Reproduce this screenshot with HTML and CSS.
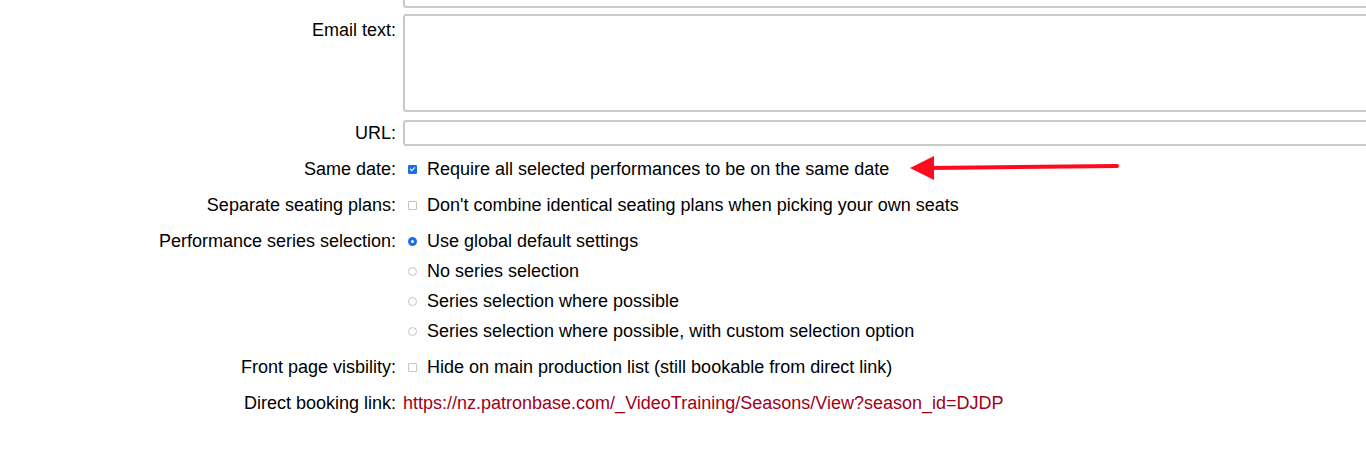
FILE: index.html
```html
<!DOCTYPE html>
<html>
<head>
<meta charset="utf-8">
<link rel="stylesheet" href="styles.css">
</head>
<body>
<div class="form">
  <div class="row row-top">
    <div class="label"></div>
    <div class="value"><input class="text-input" type="text"></div>
  </div>
  <div class="row row-email">
    <div class="label">Email text:</div>
    <div class="value"><textarea class="textarea"></textarea></div>
  </div>
  <div class="row row-url">
    <div class="label">URL:</div>
    <div class="value"><input class="text-input" type="text"></div>
  </div>
  <div class="row row-opt row-same">
    <div class="label">Same date:</div>
    <div class="value">
      <label class="opt"><span class="box checked"></span>Require all selected performances to be on the same date</label>
    </div>
    <svg class="arrow" width="220" height="30" viewBox="0 0 220 30">
      <polygon points="0,15 24,3 24,27" fill="#ff0a1e"/>
      <line x1="20" y1="15" x2="207" y2="13" stroke="#ff0a1e" stroke-width="4" stroke-linecap="round"/>
    </svg>
  </div>
  <div class="row row-opt">
    <div class="label">Separate seating plans:</div>
    <div class="value">
      <label class="opt"><span class="box"></span>Don't combine identical seating plans when picking your own seats</label>
    </div>
  </div>
  <div class="row row-opt">
    <div class="label">Performance series selection:</div>
    <div class="value">
      <label class="opt"><span class="radio checked"></span>Use global default settings</label>
      <label class="opt"><span class="radio"></span>No series selection</label>
      <label class="opt"><span class="radio"></span>Series selection where possible</label>
      <label class="opt"><span class="radio"></span>Series selection where possible, with custom selection option</label>
    </div>
  </div>
  <div class="row row-opt">
    <div class="label">Front page visbility:</div>
    <div class="value">
      <label class="opt"><span class="box"></span>Hide on main production list (still bookable from direct link)</label>
    </div>
  </div>
  <div class="row row-opt">
    <div class="label">Direct booking link:</div>
    <div class="value">
      <a class="link" href="#">https://nz.patronbase.com/_VideoTraining/Seasons/View?season_id=DJDP</a>
    </div>
  </div>
</div>
</body>
</html>
```

FILE: styles.css
```css
html, body {
  margin: 0;
  padding: 0;
  background: #ffffff;
  overflow: hidden;
}
body {
  font-family: "Liberation Sans", Arial, sans-serif;
  font-size: 18px;
  color: #000000;
  width: 1366px;
  height: 464px;
}
.form {
  display: flex;
  flex-direction: column;
}
.row {
  display: grid;
  grid-template-columns: 396px 1000px;
  column-gap: 7px;
  position: relative;
}
.label {
  text-align: right;
  line-height: 30px;
}
.value {
  display: flex;
  flex-direction: column;
}
.text-input {
  box-sizing: border-box;
  width: 1000px;
  height: 26px;
  border: 2px solid #c9c9c9;
  border-radius: 3px;
  margin: 0;
  padding: 0 4px;
  font: inherit;
  background: #fff;
}
.textarea {
  box-sizing: border-box;
  display: block;
  width: 1000px;
  height: 98px;
  border: 2px solid #c9c9c9;
  border-radius: 3px;
  margin: 0;
  padding: 2px 4px;
  resize: none;
  font: inherit;
}
.row-top {
  margin-top: -18px;
}
.row-email {
  margin-top: 6px;
}
.row-email .label {
  line-height: 32px;
}
.row-url {
  margin-top: 8px;
  align-items: center;
}
.row-url .label {
  line-height: 26px;
}
.row-same {
  margin-top: 8px;
}
.row-opt + .row-opt {
  margin-top: 6px;
}
.opt {
  display: flex;
  align-items: center;
  height: 30px;
  line-height: 30px;
  white-space: nowrap;
}
.box, .radio {
  box-sizing: border-box;
  display: inline-block;
  flex: none;
  width: 9px;
  height: 9px;
  margin-left: 5px;
  margin-right: 10px;
  border: 1px solid #c4c4c4;
  background: #fff;
  position: relative;
}
.box {
  border-radius: 1px;
}
.box.checked {
  background: #1a6fe8;
  border-color: #1a6fe8;
}
.box.checked::after {
  content: "";
  position: absolute;
  left: 2px;
  top: 0px;
  width: 2px;
  height: 4px;
  border-right: 1.3px solid #fff;
  border-bottom: 1.3px solid #fff;
  transform: rotate(45deg);
}
.radio {
  border-radius: 50%;
  border-color: #c4c4c4;
}
.radio.checked {
  background: #ffffff;
  border: 3px solid #1a6fe8;
}
.link {
  color: #a0001a;
  text-decoration: none;
  line-height: 30px;
  white-space: nowrap;
}
.arrow {
  position: absolute;
  left: 910px;
  top: -1px;
}
```
